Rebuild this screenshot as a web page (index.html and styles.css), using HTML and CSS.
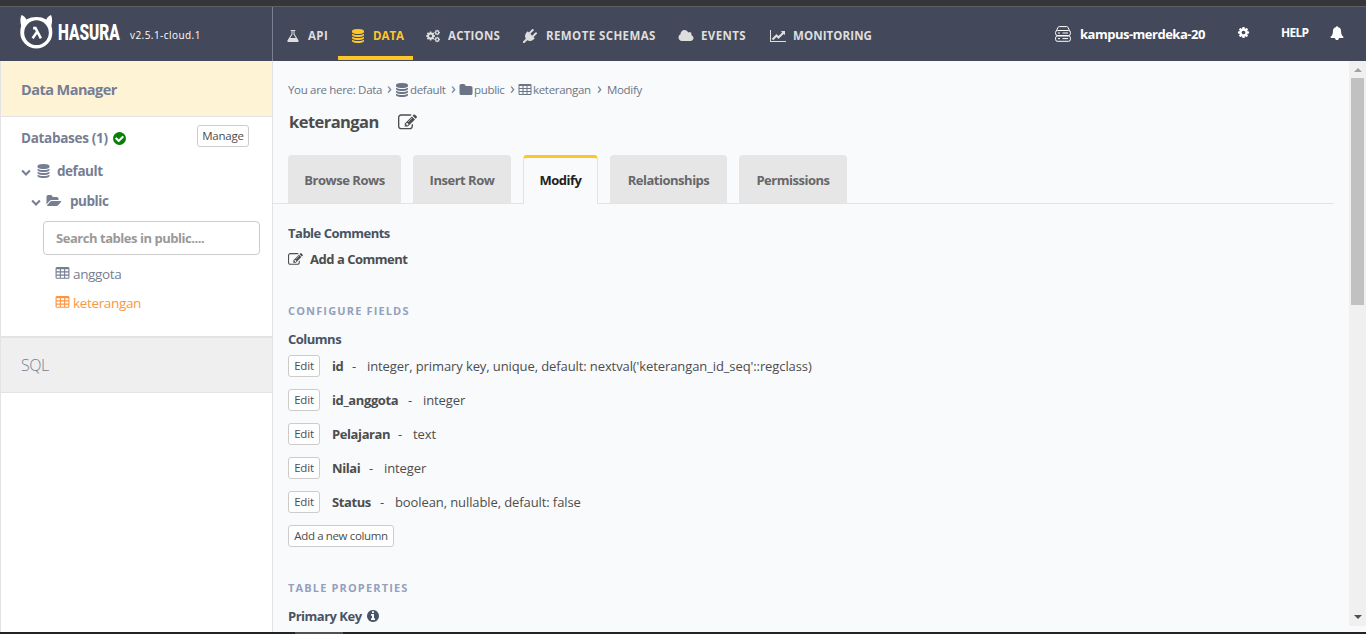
FILE: index.html
```html
<!DOCTYPE html>
<html lang="en">
<head>
<meta charset="utf-8">
<title>Hasura Console</title>
<link rel="stylesheet" href="styles.css">
</head>
<body>
<svg class="defs" aria-hidden="true">
<symbol id="database" viewBox="0 0 1792 1792"><path d="M896 768q237 0 443-43t325-127v170q0 69-103 128t-280 93.500-385 34.500-385-34.500-280-93.500-103-128v-170q119 84 325 127t443 43zm0 768q237 0 443-43t325-127v170q0 69-103 128t-280 93.500-385 34.500-385-34.500-280-93.500-103-128v-170q119 84 325 127t443 43zm0-384q237 0 443-43t325-127v170q0 69-103 128t-280 93.500-385 34.500-385-34.500-280-93.500-103-128v-170q119 84 325 127t443 43zm0-1152q208 0 385 34.500t280 93.500 103 128v128q0 69-103 128t-280 93.500-385 34.500-385-34.500-280-93.500-103-128v-128q0-69 103-128t280-93.500 385-34.500z"/></symbol>
<symbol id="table" viewBox="0 0 1792 1792"><path d="M576 1376v-192q0-14-9-23t-23-9h-320q-14 0-23 9t-9 23v192q0 14 9 23t23 9h320q14 0 23-9t9-23zm0-384v-192q0-14-9-23t-23-9h-320q-14 0-23 9t-9 23v192q0 14 9 23t23 9h320q14 0 23-9t9-23zm512 384v-192q0-14-9-23t-23-9h-320q-14 0-23 9t-9 23v192q0 14 9 23t23 9h320q14 0 23-9t9-23zm-512-768v-192q0-14-9-23t-23-9h-320q-14 0-23 9t-9 23v192q0 14 9 23t23 9h320q14 0 23-9t9-23zm512 384v-192q0-14-9-23t-23-9h-320q-14 0-23 9t-9 23v192q0 14 9 23t23 9h320q14 0 23-9t9-23zm512 384v-192q0-14-9-23t-23-9h-320q-14 0-23 9t-9 23v192q0 14 9 23t23 9h320q14 0 23-9t9-23zm-512-768v-192q0-14-9-23t-23-9h-320q-14 0-23 9t-9 23v192q0 14 9 23t23 9h320q14 0 23-9t9-23zm512 384v-192q0-14-9-23t-23-9h-320q-14 0-23 9t-9 23v192q0 14 9 23t23 9h320q14 0 23-9t9-23zm0-384v-192q0-14-9-23t-23-9h-320q-14 0-23 9t-9 23v192q0 14 9 23t23 9h320q14 0 23-9t9-23zm128-320v1088q0 66-47 113t-113 47h-1344q-66 0-113-47t-47-113v-1088q0-66 47-113t113-47h1344q66 0 113 47t47 113z"/></symbol>
<symbol id="cog" viewBox="0 0 1792 1792"><path d="M1152 896q0-106-75-181t-181-75-181 75-75 181 75 181 181 75 181-75 75-181zm512-109v222q0 12-8 23t-20 13l-185 28q-19 54-39 91 35 50 107 138 10 12 10 25t-9 23q-27 37-99 108t-94 71q-12 0-26-9l-138-108q-44 23-91 38-16 136-29 186-7 28-36 28h-222q-14 0-24.500-8.500t-11.500-21.500l-28-184q-49-16-90-37l-141 107q-10 9-25 9-14 0-25-11-126-114-165-168-7-10-7-23 0-12 8-23 15-21 51-66.500t54-70.500q-27-50-41-99l-183-27q-13-2-21-12.500t-8-23.500v-222q0-12 8-23t19-13l186-28q14-46 39-92-40-57-107-138-10-12-10-24 0-10 9-23 26-36 98.500-107.500t94.500-71.500q13 0 26 10l138 107q44-23 91-38 16-136 29-186 7-28 36-28h222q14 0 24.500 8.500t11.500 21.500l28 184q49 16 90 37l142-107q9-9 24-9 13 0 25 10 129 119 165 170 7 8 7 22 0 12-8 23-15 21-51 66.500t-54 70.500q26 50 41 98l183 28q13 2 21 12.500t8 23.500z"/></symbol>
<symbol id="cogs" viewBox="0 0 14 13"><use href="#cog" x="-.6" y="1.300" width="10.400" height="10.400"/><use href="#cog" x="8" y="-.2" width="6.400" height="6.400"/><use href="#cog" x="8" y="6.800" width="6.400" height="6.400"/></symbol>
<symbol id="edit" viewBox="0 0 1792 1792"><path d="M888 1184l116-116-152-152-116 116v56h96v96h56zm440-720q-16-16-33 1l-350 350q-17 17-1 33t33-1l350-350q17-17 1-33zm80 594v190q0 119-84.500 203.500t-203.500 84.500h-832q-119 0-203.500-84.500t-84.500-203.500v-832q0-119 84.500-203.500t203.500-84.500h832q63 0 117 25 15 7 18 23 3 17-9 29l-49 49q-14 14-32 8-23-6-45-6h-832q-66 0-113 47t-47 113v832q0 66 47 113t113 47h832q66 0 113-47t47-113v-126q0-13 9-22l64-64q15-15 35-7t20 29zm-96-738l288 288-672 672h-288v-288zm444 132l-92 92-288-288 92-92q28-28 68-28t68 28l152 152q28 28 28 68t-28 68z"/></symbol>
<symbol id="check" viewBox="0 0 1792 1792"><path d="M1412 734q0-28-18-46l-91-90q-19-19-45-19t-45 19l-408 407-226-226q-19-19-45-19t-45 19l-91 90q-18 18-18 46 0 27 18 45l362 362q19 19 45 19 27 0 46-19l543-543q18-18 18-45zm252 162q0 209-103 385.500t-279.500 279.500-385.500 103-385.500-103-279.500-279.500-103-385.500 103-385.500 279.500-279.500 385.500-103 385.500 103 279.500 279.500 103 385.500z"/></symbol>
<symbol id="info" viewBox="0 0 1792 1792"><path d="M1152 1376v-160q0-14-9-23t-23-9h-96v-512q0-14-9-23t-23-9h-320q-14 0-23 9t-9 23v160q0 14 9 23t23 9h96v320h-96q-14 0-23 9t-9 23v160q0 14 9 23t23 9h448q14 0 23-9t9-23zm-128-896v-160q0-14-9-23t-23-9h-192q-14 0-23 9t-9 23v160q0 14 9 23t23 9h192q14 0 23-9t9-23zm640 416q0 209-103 385.500t-279.500 279.500-385.500 103-385.500-103-279.500-279.500-103-385.500 103-385.500 279.500-279.500 385.500-103 385.500 103 279.500 279.500 103 385.500z"/></symbol>
<symbol id="folder" viewBox="0 0 1792 1792"><path d="M1728 608v704q0 92-66 158t-158 66h-1216q-92 0-158-66t-66-158v-960q0-92 66-158t158-66h320q92 0 158 66t66 158v32h672q92 0 158 66t66 158z"/></symbol>
<symbol id="folder-open" viewBox="0 0 1920 1792"><path d="M1879 952q0 31-31 66l-336 396q-43 51-120.500 86.500t-143.500 35.500h-1088q-34 0-60.500-13t-26.500-43q0-31 31-66l336-396q43-51 120.500-86.500t143.500-35.500h1088q34 0 60.500 13t26.500 43zm-343-344v160h-832q-94 0-197 47.500t-164 119.500l-337 396-5 6q0-4-.5-12.500t-.5-12.500v-960q0-92 66-158t158-66h320q92 0 158 66t66 158v32h544q92 0 158 66t66 158z"/></symbol>
<symbol id="chevron" viewBox="0 0 1792 1792"><path d="M1683 808l-742 741q-19 19-45 19t-45-19l-742-741q-19-19-19-45.500t19-45.500l166-165q19-19 45-19t45 19l531 531 531-531q19-19 45-19t45 19l166 165q19 19 19 45.500t-19 45.500z"/></symbol>
<symbol id="cloud" viewBox="0 0 2048 1792"><path d="M1984 1152q0 159-112.500 271.500t-271.500 112.500h-1088q-185 0-316.500-131.500t-131.500-316.500q0-132 71-241.500t187-163.500q-2-28-2-43 0-212 150-362t362-150q158 0 286.500 88t187.500 230q70-62 166-62 106 0 181 75t75 181q0 75-41 138 129 30 213 134.500t84 239.500z"/></symbol>
<symbol id="chart" viewBox="0 0 2048 1792"><path d="M2048 1536v128h-2048v-1536h128v1408h1920zm-128-1248v435q0 21-19.500 29.500t-35.500-7.500l-121-121-633 633q-10 10-23 10t-23-10l-233-233-416 416-192-192 585-585q10-10 23-10t23 10l233 233 464-464-121-121q-16-16-7.500-35.500t29.500-19.500h435q14 0 23 9t9 23z"/></symbol>
<symbol id="flask" viewBox="0 0 1792 1792"><path d="M1591 1448q56 89 21.500 152.500t-140.500 63.500h-1152q-106 0-140.500-63.500t21.500-152.500l503-793v-399h-64q-26 0-45-19t-19-45 19-45 45-19h512q26 0 45 19t19 45-19 45-45 19h-64v399zm-779-725l-272 429h712l-272-429-20-31v-436h-128v436z"/></symbol>
<symbol id="plug" viewBox="0 0 1792 1792"><path d="M1755 453q37 38 37 90.500t-37 90.500l-401 400 150 150-160 160q-163 163-389.500 186.500t-411.500-100.500l-362 362h-181v-181l362-362q-124-185-100.500-411.500t186.500-389.500l160-160 150 150 400-401q38-37 91-37t90 37 37 90.500-37 90.500l-400 401 234 234 401-400q38-37 91-37t90 37z"/></symbol>
<symbol id="bell" viewBox="0 0 1792 1792"><path d="M1728 1408q0 52-38 90t-90 38h-448q0 106-75 181t-181 75-181-75-75-181h-448q-52 0-90-38t-38-90q50-42 91-88t85-119.500 74.500-158.500 50-206 19.500-260q0-152 117-282.500t307-158.500q-8-19-8-39 0-40 28-68t68-28 68 28 28 68q0 20-8 39 190 28 307 158.500t117 282.500q0 139 19.500 260t50 206 74.500 158.500 85 119.500 91 88z"/></symbol>
</svg>
<div class="top-strip"></div>
<header class="header">
  <div class="brand">
    <svg class="logo" viewBox="0 0 34 35"><path fill="#fff" fill-rule="evenodd" d="M1.500 0C4 1 5.500 2.500 6.500 4.500Q11 2 17 2T27 4.500C28 2.500 30 1 32 0Q34 5 32.300 11Q33.300 14 33.300 18A16.500 16.500 0 0 1 .3 18Q.3 14 1.200 11Q-.5 5 1.500 0zM17 5.500a12.700 12.700 0 1 0 0 25.400a12.700 12.700 0 1 0 0-25.400z"/><path d="M13.500 13.500h2.500l5.500 10.500M17.500 17.500l-4.500 6.500" fill="none" stroke="#fff" stroke-width="2.600"/></svg>
    <span class="wordmark">HASURA</span>
    <span class="version">v2.5.1-cloud.1</span>
  </div>
  <nav class="nav">
    <a class="nav-item w-api"><span class="nav-icon"><svg class="i14"><use href="#flask"/></svg></span>API</a>
    <a class="nav-item w-data active"><span class="nav-icon"><svg class="i14"><use href="#database"/></svg></span>DATA</a>
    <a class="nav-item w-actions"><span class="nav-icon"><svg class="i14"><use href="#cogs"/></svg></span>ACTIONS</a>
    <a class="nav-item w-remote"><span class="nav-icon"><svg class="i14"><use href="#plug"/></svg></span>REMOTE SCHEMAS</a>
    <a class="nav-item w-events"><span class="nav-icon"><svg class="i-wide"><use href="#cloud"/></svg></span>EVENTS</a>
    <a class="nav-item w-monitor"><span class="nav-icon"><svg class="i-wide"><use href="#chart"/></svg></span>MONITORING</a>
  </nav>
  <div class="tools">
    <svg class="server" viewBox="0 0 16 16"><g fill="none" stroke="#fff" stroke-width="1"><path d="M1.500 4.500L3 1.500Q3.300.6 4.300.6h7.400q1 0 1.300.9l1.500 3"/><rect x=".6" y="4.500" width="14.800" height="5" rx="1.800"/><rect x=".6" y="10" width="14.800" height="5.300" rx="1.800"/><path d="M3 7h2m2.500 0h5.500M3 12.600h2m2.500 0h5.500"/></g></svg>
    <span class="project">kampus-merdeka-20</span>
    <svg class="tool-cog"><use href="#cog"/></svg>
    <span class="help">HELP</span>
    <svg class="tool-bell"><use href="#bell"/></svg>
  </div>
</header>
<div class="body">
  <aside class="sidebar">
    <div class="dm">Data Manager</div>
    <div class="tree">
      <div class="db-head"><span class="db-title">Databases (1)</span><svg class="ok"><use href="#check"/></svg><button class="btn manage">Manage</button></div>
      <div class="node node-db"><svg class="chev"><use href="#chevron"/></svg><svg class="db-icon"><use href="#database"/></svg><span>default</span></div>
      <div class="node node-schema"><svg class="chev"><use href="#chevron"/></svg><svg class="fo-icon"><use href="#folder-open"/></svg><span>public</span></div>
      <div class="search">Search tables in public....</div>
      <div class="tbl tbl-first"><svg class="i15"><use href="#table"/></svg><span>anggota</span></div>
      <div class="tbl current"><svg class="i15"><use href="#table"/></svg><span>keterangan</span></div>
    </div>
    <div class="sql">SQL</div>
  </aside>
  <main class="main">
    <div class="crumbs"><span class="c1">You are here: Data</span><span class="sep">›</span><svg class="i14"><use href="#database"/></svg><span class="c2">default</span><span class="sep">›</span><svg class="i14"><use href="#folder"/></svg><span class="c3">public</span><span class="sep">›</span><svg class="i14"><use href="#table"/></svg><span class="c4">keterangan</span><span class="sep">›</span><span class="c5">Modify</span></div>
    <div class="title"><span>keterangan</span><svg><use href="#edit"/></svg></div>
    <div class="tabs">
      <a class="tab t1">Browse Rows</a><a class="tab t2">Insert Row</a><a class="tab t3 tab-on">Modify</a><a class="tab t4">Relationships</a><a class="tab t5">Permissions</a>
    </div>
    <div class="content">
      <h4 class="h">Table Comments</h4>
      <div class="comment"><svg><use href="#edit"/></svg><span>Add a Comment</span></div>
      <h5 class="caps">CONFIGURE FIELDS</h5>
      <h4 class="h">Columns</h4>
      <div class="col"><button class="btn edit">Edit</button><b class="k1">id</b><i>-</i><span>integer, primary key, unique, default: nextval('keterangan_id_seq'::regclass)</span></div>
      <div class="col"><button class="btn edit">Edit</button><b class="k2">id_anggota</b><i>-</i><span>integer</span></div>
      <div class="col"><button class="btn edit">Edit</button><b class="k3">Pelajaran</b><i>-</i><span>text</span></div>
      <div class="col"><button class="btn edit">Edit</button><b class="k4">Nilai</b><i>-</i><span>integer</span></div>
      <div class="col"><button class="btn edit">Edit</button><b class="k5">Status</b><i>-</i><span>boolean, nullable, default: false</span></div>
      <button class="btn add">Add a new column</button>
      <h5 class="caps props">TABLE PROPERTIES</h5>
      <h4 class="h pk">Primary Key<svg><use href="#info"/></svg></h4>
    </div>
  </main>
  <div class="scroll"><span class="up"></span><span class="thumb"></span><span class="down"></span></div>
</div>
<div class="bottom"><span></span></div>
</body>
</html>
```
FILE: styles.css
```css
* { box-sizing: border-box; }
body { margin: 0; width: 1366px; height: 634px; overflow: hidden; display: flex; flex-direction: column; background: #f9fafc; font-family: "Open Sans", "Noto Sans", sans-serif; color: #4d4d4d; }
svg { fill: currentColor; flex: none; display: block; }
.defs { position: absolute; width: 0; height: 0; }
.i14 { width: 14px; height: 14px; }
.i15 { width: 15px; height: 15px; }
.i-wide { width: 16px; height: 14px; }
.top-strip { height: 7px; flex: none; background: #35363a; border-bottom: 1px solid #5f6063; }
.header { height: 54px; flex: none; display: flex; background: #43495a; color: #fff; }
.brand { width: 273px; flex: none; display: flex; align-items: flex-start; padding-left: 20px; border-right: 1px solid #788095; }
.logo { width: 33px; height: 34px; margin-top: 8px; }
.wordmark { width: 62px; margin: 13px 0 0 5px; font: 900 22px/26px Roboto, sans-serif; transform: scaleX(.7); transform-origin: 0 50%; }
.version { margin: 19px 0 0 10px; font-size: 10px; line-height: 18px; letter-spacing: .45px; }
.nav { display: flex; }
.nav-item { display: flex; align-items: center; padding-top: 8px; height: 53px; border-bottom: 4px solid transparent; font-size: 11.500px; font-weight: 700; letter-spacing: .4px; color: #dedede; white-space: nowrap; }
.nav-icon { width: 35px; padding-left: 13px; flex: none; }
.active { color: #ffc627; border-bottom-color: #ffc627; }
.w-api { width: 65px; }
.w-data { width: 75px; letter-spacing: 0; }
.w-actions { width: 98px; letter-spacing: .2px; }
.w-remote { width: 155px; }
.w-events { width: 92px; }
.w-monitor { letter-spacing: .1px; }
.w-remote .nav-icon, .w-events .nav-icon, .w-monitor .nav-icon { padding-left: 12px; }
.tools { margin-left: auto; display: flex; align-items: flex-start; }
.server { width: 16px; height: 16px; margin: 19px 9px 0 0; }
.project { width: 157px; margin-top: 17px; font-size: 13px; line-height: 20px; font-weight: 700; letter-spacing: -.5px; }
.tool-cog { width: 13px; height: 13px; margin-top: 19px; }
.help { width: 50px; margin: 17px 0 0 31px; font-size: 12px; line-height: 18px; font-weight: 700; letter-spacing: -.7px; }
.tool-bell { width: 14px; height: 14px; margin: 19px 22px 0 -1px; }
.body { flex: 1; min-height: 0; display: flex; }
.sidebar { width: 273px; flex: none; background: #fff; border: solid #e3e3e5; border-width: 0 1px; color: #767e93; }
.dm { height: 56px; padding: 0 20px; line-height: 57px; background: #fff3d5; border-bottom: 1px solid #e3e3e5; font-size: 14.500px; font-weight: 700; letter-spacing: -.55px; }
.tree { height: 219px; padding-left: 20px; font-weight: 700; }
.db-head { display: flex; align-items: center; height: 38px; font-size: 13.500px; padding-top: 4px; letter-spacing: -.3px; }
.db-title { width: 91px; margin-top: -1px; white-space: nowrap; }
.ok { width: 15px; height: 15px; color: #087f08; }
.btn { font: 400 11.500px/18px "Open Sans", "Noto Sans", sans-serif; letter-spacing: -.2px; color: #4d4d4d; background: #fff; border: 1px solid #ccc; border-radius: 3px; height: 22px; padding: 0; white-space: nowrap; flex: none; }
.manage { width: 52px; margin: -5px 0 0 70px; }
.node { display: flex; align-items: center; height: 31px; font-size: 13.500px; letter-spacing: -.45px; }
.chev { width: 10px; height: 10px; margin-top: 2px; }
.db-icon { width: 15px; height: 14px; margin: 0 6px 0 5px; }
.node-schema { padding-left: 10px; height: 30px; }
.fo-icon { width: 16px; height: 14px; margin: 0 8px 0 5px; }
.search { width: 217px; height: 34px; margin: 5px 0 0 22px; padding-left: 12px; border: 1px solid #ccc; border-radius: 4px; font-size: 13px; line-height: 32px; letter-spacing: -.46px; color: #999; }
.tbl { display: flex; align-items: center; gap: 3px; height: 29px; margin-left: 34px; font-size: 13.500px; font-weight: 400; letter-spacing: -.35px; }
.tbl-first { margin-top: 4px; }
.current { color: #fd9540; }
.sql { height: 57px; padding-left: 20px; line-height: 54px; font-size: 16px; letter-spacing: -.5px; font-weight: 300; background: #efefef; border-top: 2px solid #e3e3e5; border-bottom: 1px solid #e3e3e5; }
.main { flex: 1; min-width: 0; }
.crumbs { display: flex; align-items: center; height: 18px; margin: 19px 0 0 15px; font-size: 11.500px; letter-spacing: -.32px; color: #6b7585; white-space: nowrap; }
.crumbs svg { margin-top: 1px; }
.sep { width: 13px; padding-left: 5px; font-size: 16px; line-height: 14px; margin-top: -2px; }
.c1 { width: 94px; }
.c2, .c3, .c4 { padding-left: 1px; }
.c2 { width: 37px; }
.c3 { width: 32px; }
.c4 { width: 60px; }
.c5 { margin-left: 2px; }
.title { display: flex; align-items: center; height: 30px; margin: 8px 0 0 16px; font-size: 16.500px; font-weight: 700; letter-spacing: -.55px; }
.title span { width: 109px; }
.title svg { width: 19px; height: 19px; margin-top: 2px; }
.tabs { display: flex; height: 49px; margin: 19px 15px 0 0; padding-left: 15px; gap: 12px; border-bottom: 1px solid #e3e3e5; }
.tab { height: 48px; line-height: 51px; border-radius: 4px 4px 0 0; background: #e6e6e6; text-align: center; font-size: 13px; font-weight: 700; letter-spacing: -.48px; color: #676767; white-space: nowrap; }
.t1 { width: 113px; }
.t2 { width: 98px; }
.t3 { width: 75px; }
.t4 { width: 117px; }
.t5 { width: 108px; }
.tab-on { height: 49px; line-height: 45px; background: #f9fafc; color: #222; border: 1px solid #e3e3e5; border-top: 3px solid #ffc627; border-bottom: 0; }
.content { padding: 19px 0 0 15px; }
.h { margin: 0; height: 20px; line-height: 20px; font-size: 13px; font-weight: 700; letter-spacing: -.5px; color: #485363; white-space: nowrap; }
.comment { display: flex; align-items: center; gap: 7px; height: 20px; margin-top: 6px; font-size: 13px; font-weight: 700; letter-spacing: -.48px; }
.comment svg { width: 15px; height: 15px; }
.caps { margin: 32px 0 0; height: 20px; line-height: 20px; font-size: 11px; font-weight: 700; letter-spacing: 1.150px; color: #94a1bd; }
.caps + .h { margin-top: 8px; }
.col { display: flex; align-items: center; height: 22px; margin-bottom: 12px; font-size: 13px; letter-spacing: -.1px; white-space: nowrap; }
.h + .col { margin-top: 6px; }
.col b { font-weight: 700; letter-spacing: -.4px; }
.edit { width: 32px; margin-right: 12px; }
.col i { width: 16px; padding-left: 1px; font-style: normal; }
.k1 { width: 19px; }
.k2 { width: 75px; }
.k3 { width: 65px; }
.k4 { width: 36px; }
.k5 { width: 47px; }
.add { width: 106px; display: block; letter-spacing: -.37px; }
.props { margin-top: 31px; }
.pk { display: flex; align-items: center; gap: 4px; }
.pk svg { width: 14px; height: 14px; }
.scroll { width: 17px; height: 565px; flex: none; background: #f0f0f0; display: flex; flex-direction: column; align-items: center; }
.up { border: solid transparent; border-width: 0 4px 4px; border-bottom-color: #a3a3a3; margin: 7px 0 6px; }
.thumb { width: 13px; height: 227px; background: #c1c1c1; }
.down { border: solid transparent; border-width: 4px 4px 0; border-top-color: #505050; margin-top: auto; margin-bottom: 7px; }
.bottom { height: 2px; flex: none; background: #222226; }
.bottom span { display: block; width: 48px; height: 2px; margin-left: 295px; background: #505055; }
```
